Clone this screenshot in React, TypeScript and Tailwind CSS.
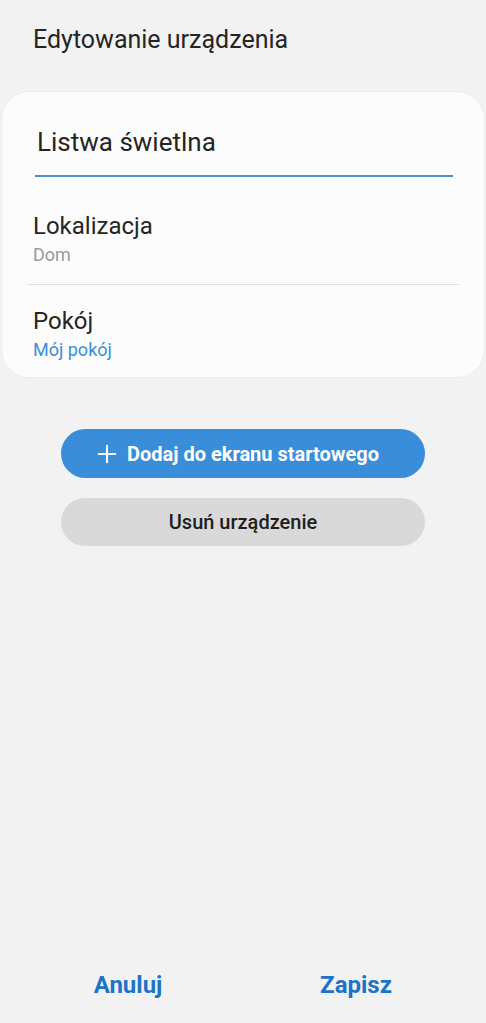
import { Plus } from "lucide-react";

const App = () => {
  return (
    <div
      className="w-[486px] h-[1023px] bg-[#f2f2f2] flex flex-col overflow-hidden"
      style={{ fontFamily: "Roboto, 'Noto Sans', sans-serif" }}
    >
      {/* Header */}
      <h1 className="pt-[25px] pl-[33px] text-[25px] leading-[30px] text-[#252525]">
        Edytowanie urządzenia
      </h1>

      {/* Card */}
      <div className="mt-[36px] mx-px bg-[#fcfcfc] rounded-[28px] border border-[#ececec] pt-[34px] pb-[15px]">
        <div className="pl-[33px] pr-[31px]">
          <p className="text-[26px] leading-[32px] text-[#252525] pl-[2px]">Listwa świetlna</p>
          <div className="mt-[17px] h-[2px] bg-[#4a90d0]"></div>
        </div>

        <div className="px-[31px] pt-[34px] pb-[17px]">
          <p className="text-[24px] leading-[30px] text-[#252525]">Lokalizacja</p>
          <p className="text-[18px] leading-[24px] text-[#9a9a9a] mt-[2px]">Dom</p>
        </div>

        <div className="mx-[25px] h-px bg-[#e3e3e3]"></div>

        <div className="px-[31px] pt-[21px]">
          <p className="text-[24px] leading-[30px] text-[#252525]">Pokój</p>
          <p className="text-[18px] leading-[24px] text-[#3a8fd8] mt-[2px]">Mój pokój</p>
        </div>
      </div>

      {/* Buttons */}
      <div className="flex flex-col items-center gap-[20px] mt-[51px]">
        <button className="w-[364px] h-[49px] rounded-full bg-[#3a8dd8] text-white flex items-center justify-center gap-[6px] pr-[14px] text-[20px] font-bold">
          <Plus size={28} strokeWidth={1.8} />
          Dodaj do ekranu startowego
        </button>
        <button className="w-[364px] h-[48px] rounded-full bg-[#d9d9d9] text-[#1f1f1f] flex items-center justify-center text-[20px] font-medium">
          Usuń urządzenie
        </button>
      </div>

      {/* Footer */}
      <div className="mt-auto mb-[10px] flex">
        <button className="flex-1 h-[56px] text-[24px] font-bold text-[#1b74c8] pl-[14px]">Anuluj</button>
        <button className="flex-1 h-[56px] text-[24px] font-bold text-[#1b74c8] pr-[16px]">Zapisz</button>
      </div>
    </div>
  );
};

export default App;
